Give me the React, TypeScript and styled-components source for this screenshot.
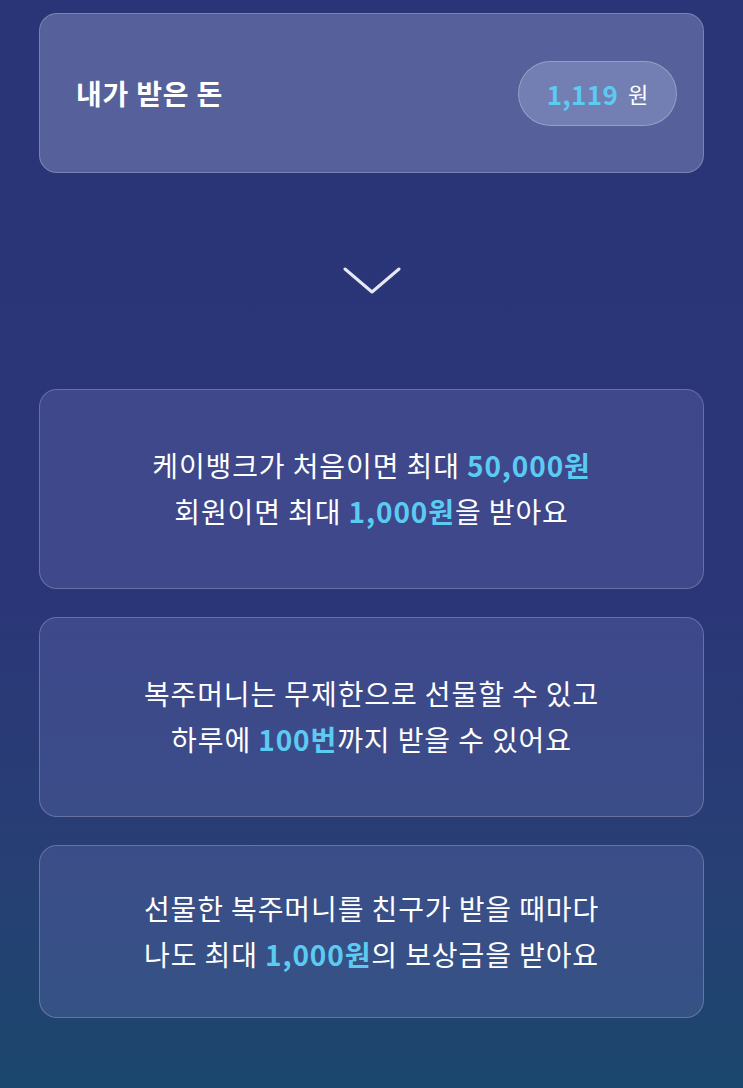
import styled, { createGlobalStyle } from "styled-components";

const GlobalStyle = createGlobalStyle`
  html, body {
    margin: 0;
    padding: 0;
  }
  body {
    font-family: "Noto Sans CJK KR", "Noto Sans", sans-serif;
    background: #2a3577;
  }
`;

const Page = styled.div`
  width: 743px;
  height: 1088px;
  box-sizing: border-box;
  padding: 13px 39px 0;
  background: linear-gradient(
    180deg,
    #2a3577 0%,
    #2b3678 55%,
    #273f74 80%,
    #1b476d 100%
  );
  display: flex;
  flex-direction: column;
  overflow: hidden;
`;

const Card = styled.div<{ $tone?: "light" | "dark" }>`
  box-sizing: border-box;
  border-radius: 18px;
  border: 1.5px solid rgba(255, 255, 255, 0.22);
  background: ${(p) =>
    p.$tone === "light" ? "rgba(140, 150, 200, 0.45)" : "rgba(110, 120, 190, 0.28)"};
`;

const BalanceCard = styled(Card)`
  height: 160px;
  display: flex;
  align-items: center;
  justify-content: space-between;
  padding: 0 26px 0 36px;
`;

const Label = styled.div`
  color: #ffffff;
  font-size: 28px;
  font-weight: 700;
  letter-spacing: 0.8px;
`;

const Pill = styled.div`
  box-sizing: border-box;
  height: 65px;
  width: 159px;
  border-radius: 33px;
  background: rgba(170, 180, 220, 0.35);
  border: 1.5px solid rgba(255, 255, 255, 0.25);
  display: flex;
  align-items: center;
  justify-content: center;
  gap: 10px;
`;

const Amount = styled.span`
  color: #5ccbf2;
  font-size: 26px;
  font-weight: 700;
  letter-spacing: 0.3px;
`;

const Unit = styled.span`
  color: #ffffff;
  font-size: 22px;
  font-weight: 400;
`;

const ChevronRow = styled.div`
  height: 216px;
  display: flex;
  align-items: center;
  justify-content: center;
`;

const InfoList = styled.div`
  display: flex;
  flex-direction: column;
  gap: 28px;
`;

const InfoCard = styled(Card)<{ $h: number }>`
  height: ${(p) => p.$h}px;
  display: flex;
  align-items: center;
  justify-content: center;
  text-align: center;
  padding-bottom: 2px;
`;

const InfoText = styled.p`
  margin: 0;
  color: #ffffff;
  font-size: 28px;
  line-height: 46px;
  font-weight: 400;
  letter-spacing: 0.9px;
`;

const Em = styled.span`
  color: #5ccbf2;
  font-weight: 700;
`;

function Chevron() {
  return (
    <svg width="58" height="30" viewBox="0 0 58 30" fill="none">
      <path
        d="M2 3 L29 26 L56 3"
        stroke="#e6e9f5"
        strokeWidth="3"
        strokeLinecap="round"
        strokeLinejoin="round"
      />
    </svg>
  );
}

export default function App() {
  return (
    <>
      <GlobalStyle />
      <Page>
        <BalanceCard $tone="light">
          <Label>내가 받은 돈</Label>
          <Pill>
            <Amount>1,119</Amount>
            <Unit>원</Unit>
          </Pill>
        </BalanceCard>

        <ChevronRow>
          <Chevron />
        </ChevronRow>

        <InfoList>
          <InfoCard $h={200}>
            <InfoText>
              케이뱅크가 처음이면 최대 <Em>50,000원</Em>
              <br />
              회원이면 최대 <Em>1,000원</Em>을 받아요
            </InfoText>
          </InfoCard>
          <InfoCard $h={200}>
            <InfoText>
              복주머니는 무제한으로 선물할 수 있고
              <br />
              하루에 <Em>100번</Em>까지 받을 수 있어요
            </InfoText>
          </InfoCard>
          <InfoCard $h={173}>
            <InfoText>
              선물한 복주머니를 친구가 받을 때마다
              <br />
              나도 최대 <Em>1,000원</Em>의 보상금을 받아요
            </InfoText>
          </InfoCard>
        </InfoList>
      </Page>
    </>
  );
}
